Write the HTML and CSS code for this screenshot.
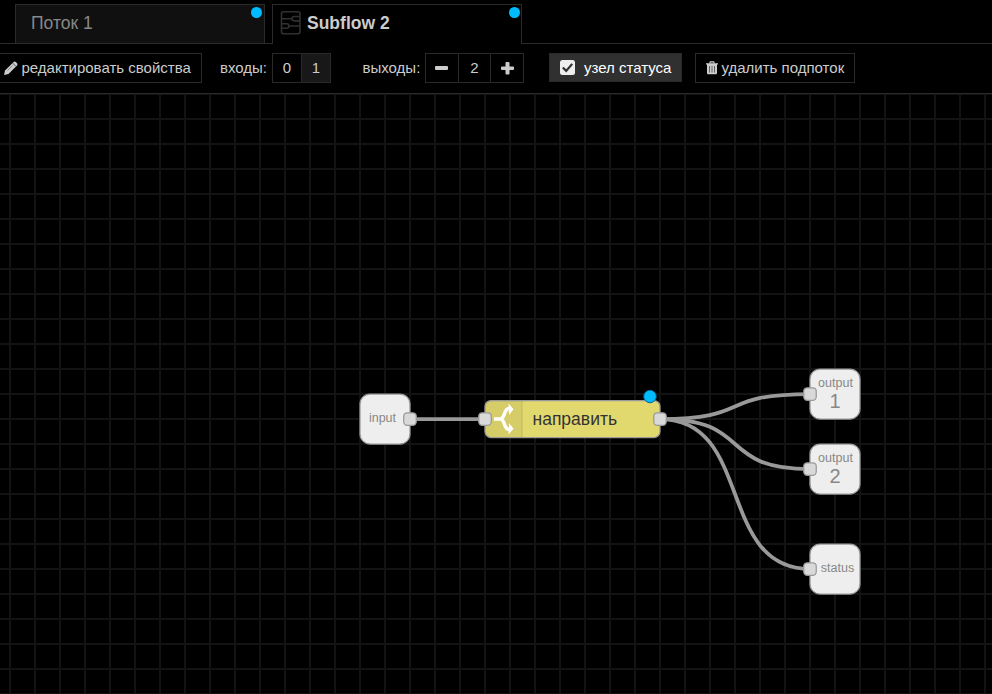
FILE: index.html
```html
<!DOCTYPE html>
<html lang="ru">
<head>
<meta charset="utf-8">
<title>Subflow 2</title>
<link rel="stylesheet" href="styles.css">
</head>
<body>
<nav class="tabs">
  <div class="tab">Поток 1<i class="dot"></i></div>
  <div class="tab active">
    <svg class="flow-icon" width="22" height="26" viewBox="0 0 22 26">
      <g fill="none" stroke="#303030" stroke-width="1.6">
        <rect x="1.500" y="1.800" width="18.500" height="22" rx="2"/>
        <path d="M20 6.500h-5.500q-2.500 0-2.500 2.200t2.500 2.200H20M12 8.700H1.500M1.500 13.800h5q2.500 0 2.500 2.200t-2.500 2.200h-5M9 16h11"/>
      </g>
    </svg>
    Subflow 2<i class="dot"></i>
  </div>
</nav>
<div class="toolbar">
  <a class="button edit">
    <svg width="14" height="14" viewBox="0 0 14 14"><path fill="#ccc" d="M0 14l1-4.500L9.600 1.100q1.200-1 2.300 0l1.100 1.100q1 1.200 0 2.300L4.500 13z"/><path stroke="#333" stroke-width=".8" d="M8.800 2.200l3.100 3.100"/><path stroke="#777" stroke-width=".8" d="M3.500 9.500l5-5"/></svg>
    <span>редактировать свойства</span>
  </a>
  <span class="label inputs">входы:</span>
  <div class="group in"><a>0</a><a class="selected">1</a></div>
  <span class="label outputs">выходы:</span>
  <div class="group out">
    <a><svg width="13" height="13" viewBox="0 0 13 13"><rect y="4" width="13" height="4" rx="1" fill="#ccc"/></svg></a>
    <a>2</a>
    <a><svg width="13" height="13" viewBox="0 0 13 13"><path fill="#ccc" d="M5.500 0h2q1 0 1 1v3.500H12q1 0 1 1v1.500q0 1-1 1H8.500V11.500q0 1-1 1h-2q-1 0-1-1V8H1q-1 0-1-1V5.500q0-1 1-1h3.500V1q0-1 1-1z"/></svg></a>
  </div>
  <a class="status">
    <svg width="15" height="15" viewBox="0 0 15 15"><rect width="15" height="15" rx="2.500" fill="#eee"/><path d="M2.800 7.500l3.400 3.400 6-7" fill="none" stroke="#303030" stroke-width="2.200"/></svg>
    <span>узел статуса</span>
  </a>
  <a class="button delete">
    <svg width="12" height="14" viewBox="0 0 12 14"><path fill="none" stroke="#ccc" stroke-width="1.200" d="M3.700 2.500L4.300.8h3.400l.6 1.700"/><path fill="#ccc" d="M0 2.200h12v1.300h-1V12q0 1.300-1.300 1.300H2.300Q1 13.300 1 12V3.500H0z"/><path stroke="#555" stroke-width=".9" d="M3.500 5v6.500M6 5v6.500M8.500 5v6.500"/></svg>
    <span>удалить подпоток</span>
  </a>
</div>
<svg class="workspace" width="992" height="600" viewBox="0 94 992 600">
  <defs>
    <pattern id="grid" x="9" y="93" width="25" height="25" patternUnits="userSpaceOnUse">
      <path class="grid-line" d="M0 1H25M1 0V25"/>
    </pattern>
    <rect id="port" class="port" x="-6.250" y="-6.250" width="12.500" height="12.500" rx="3.500"/>
    <rect id="box" class="box" width="50" height="50" rx="10"/>
  </defs>
  <rect y="94" width="992" height="600" fill="url(#grid)"/>
  <g class="wires">
    <path d="M410 419H485"/>
    <path d="M660 419C753.750 419 716.250 394 810 394"/>
    <path d="M660 419C753.750 419 716.250 469 810 469"/>
    <path d="M660 419C753.750 419 716.250 569 810 569"/>
  </g>
  <use href="#box" x="360" y="394"/>
  <text class="caption" x="382.500" y="422">input</text>
  <use href="#port" x="410" y="419"/>

  <rect class="node" x="485" y="400.500" width="175" height="37" rx="6"/>
  <path class="shade" d="M522 401V437H491q-5.500 0-5.500-5.500V406.500q0-5.500 5.500-5.500z"/>
  <path class="divider" d="M522 401V437"/>
  <g class="switch">
    <path d="M494 419h8M501 419c4.500-2 2.500-10 8-10.500h1M501 419c4.500 2 2.500 10 8 10.500h1"/>
    <path class="head" d="M508.500 403.500l5 5.700-4.500 5.800zM509 423l4.500 5.800-5 5.700z"/>
  </g>
  <text class="node-label" x="532.500" y="425">направить</text>
  <use href="#port" x="485" y="419"/>
  <use href="#port" x="660" y="419"/>
  <circle class="changed" cx="650" cy="396.500" r="6.250"/>

  <use href="#box" x="810" y="369"/>
  <text class="caption" x="835.500" y="387">output</text>
  <text class="index" x="835" y="408">1</text>
  <use href="#port" x="810" y="394"/>
  <use href="#box" x="810" y="444"/>
  <text class="caption" x="835.500" y="462">output</text>
  <text class="index" x="835" y="483">2</text>
  <use href="#port" x="810" y="469"/>
  <use href="#box" x="810" y="544"/>
  <text class="caption" x="837.500" y="572">status</text>
  <use href="#port" x="810" y="569"/>
</svg>
</body>
</html>
```
FILE: styles.css
```css
* { box-sizing: border-box; }
body {
  margin: 0;
  width: 992px;
  height: 694px;
  overflow: hidden;
  background: #000;
  color: #ccc;
  font: 15px "Liberation Sans", Arial, sans-serif;
}
.tabs {
  display: flex;
  height: 44px;
  padding: 4px 0 0 15px;
  gap: 7px;
  border-bottom: 1px solid #2a2a2a;
}
.tab {
  position: relative;
  width: 250px;
  height: 39px;
  padding: 0 15px;
  border: 1px solid #2a2a2a;
  border-bottom: 0;
  background: #101010;
  color: #888;
  font-size: 17.5px;
  line-height: 36px;
}
.tab.active {
  display: flex;
  height: 40px;
  padding-left: 7px;
  background: #000;
  color: #ccc;
  font-weight: bold;
}
.flow-icon { margin: 5px 5px 0 0; }
.dot {
  position: absolute;
  top: 2px;
  right: 2px;
  width: 11px;
  height: 11px;
  border-radius: 50%;
  background: #00bcff;
}
.active .dot { right: 1px; }
.toolbar {
  display: flex;
  align-items: flex-start;
  height: 50px;
  padding-top: 9px;
  border-bottom: 1px solid #2a2a2a;
  line-height: 28px;
  white-space: nowrap;
}
.button, .group {
  display: flex;
  align-items: center;
  height: 30px;
  border: 1px solid #2a2a2a;
}
.edit {
  width: 202px;
  padding-left: 4px;
  gap: 3.5px;
  border-left: 0;
}
.label { line-height: 30px; }
.inputs { width: 47px; margin: 0 5px 0 18px; }
.outputs { width: 57.5px; margin: 0 5px 0 31.5px; }
.group a {
  display: flex;
  flex: 1;
  height: 28px;
  align-items: center;
  justify-content: center;
}
.group a + a { border-left: 1px solid #2a2a2a; }
.in { width: 59px; }
.out { width: 99px; }
.selected { background: #181818; }
.status {
  display: flex;
  align-items: center;
  width: 133px;
  height: 29px;
  margin: 0 13px 0 25px;
  padding-left: 10px;
  gap: 9px;
  border: 1px solid #2a2a2a;
  background: #303030;
  color: #fff;
}
.delete { width: 160px; padding-left: 10px; gap: 3.5px; }
.workspace { display: block; }
.grid-line { stroke: #fff; stroke-opacity: .075; stroke-width: 2; fill: none; }
.wires { fill: none; stroke: #999; stroke-width: 3.75; }
.box { fill: #eee; stroke: #999; stroke-width: 1.25; }
.port { fill: #d9d9d9; stroke: #999; stroke-width: 1.25; }
.node { fill: #e2d96e; stroke: #999; stroke-width: 1.25; }
.shade { fill: #000; fill-opacity: .05; }
.divider { stroke: #000; stroke-opacity: .1; stroke-width: 1.25; }
.switch { fill: none; stroke: #fff; stroke-width: 3.5; }
.head { fill: #fff; stroke: none; }
.changed { fill: #00bcff; stroke: #00689a; stroke-width: 1; }
.caption { fill: #888; font-size: 12.5px; text-anchor: middle; }
.index { fill: #888; font-size: 20px; text-anchor: middle; }
.node-label { fill: #333; font-size: 17.5px; }
```
